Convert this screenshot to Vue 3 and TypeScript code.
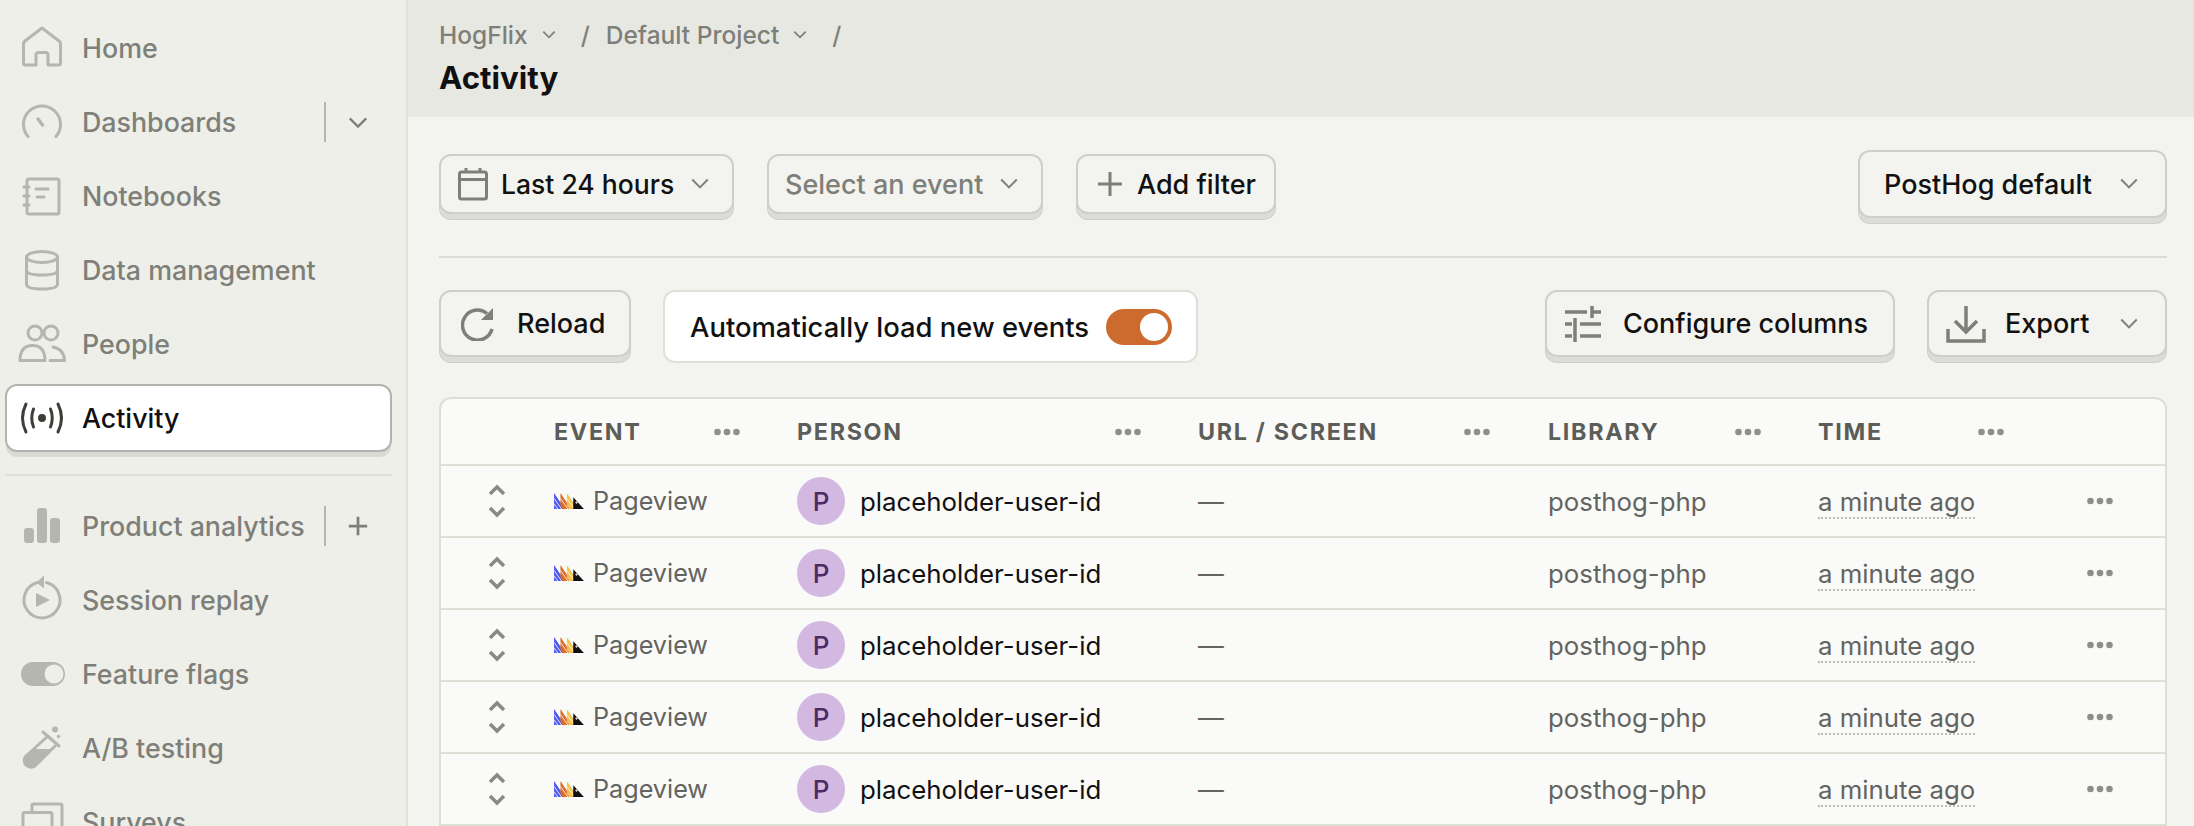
<script setup lang="ts">
// icon inner markup, drawn on a 44x44 box
const strokeIcons = {
  home: '<path d="M22 2 5 15q-1.500 1-1.500 3v19q0 2 2 2H16V29q0-2.500 2.500-2.500h7q2.500 0 2.500 2.500v10h10.500q2 0 2-2V18q0-2-1.500-3z"/>',
  gauge: '<path d="M8 36.500a18.500 18.500 0 1 1 28 0"/><path d="m18 19 4.500 6" stroke-width="3.500"/>',
  notebook: '<rect x="7" y="5" width="32" height="35" rx="2"/><path d="M4 13h5M4 22h5M4 31h5M16 15h12M17 23h7"/>',
  data: '<ellipse cx="22" cy="9" rx="15.500" ry="5.500"/><path d="M6.500 9v27q0 5 15.500 5t15.500-5V9M6.500 22q0 5 15.500 5t15.500-5"/>',
  people: '<circle cx="15" cy="11" r="7"/><circle cx="31" cy="11" r="7"/><path d="M0 38.500q0-15 12.500-15t12.500 15z"/><path d="M33 25q11 2 11.500 13.500H30"/>',
  activity: '<path d="M13.500 13q-3.500 9 0 18M30.500 13q3.500 9 0 18M6 8q-7 14 0 28M38 8q7 14 0 28"/><circle cx="22" cy="22" r="2.500" fill="currentColor"/>',
  replay: '<path d="M17.500 4.500a18 18 0 1 0 9 0"/><path d="M24 -2.500 16.500 4.500l7.500 6z" fill="currentColor" stroke="none"/><path d="M16 15v14l14-7z" fill="currentColor" stroke="none"/>',
}

const fillIcons = {
  bars: '<rect x="4" y="24" width="10" height="15" rx="3"/><rect x="17" y="4" width="10" height="35" rx="3"/><rect x="30" y="14" width="10" height="25" rx="3"/>',
  flag: '<rect x="1" y="10" width="44" height="24" rx="12"/><circle cx="34" cy="22" r="9.500" fill="#eeefe9"/>',
  flask: '<circle cx="35" cy="3.500" r="3"/><circle cx="38.500" cy="10.500" r="1.700"/><path d="M23 6 39 20" fill="none" stroke="currentColor" stroke-width="3"/><path d="M28 10 6 30a6.500 6.500 0 0 0 10 9l19-19" fill="none" stroke="currentColor" stroke-width="3"/><path d="M13 23h20L16 39a6.500 6.500 0 0 1-10-9z"/>',
}

const surveys = '<path d="M12 12V5.500q0-1.500 1.500-1.500h27q1.500 0 1.500 1.500v30M3 44V14q0-1.500 1.500-1.500h26q1.500 0 1.500 1.500v30"/>'

type Item = { label: string; icon: string; solid?: boolean; side?: 'chevron' | 'plus'; active?: boolean }

const topItems: Item[] = [
  { label: 'Home', icon: strokeIcons.home },
  { label: 'Dashboards', icon: strokeIcons.gauge, side: 'chevron' },
  { label: 'Notebooks', icon: strokeIcons.notebook },
  { label: 'Data management', icon: strokeIcons.data },
  { label: 'People', icon: strokeIcons.people },
  { label: 'Activity', icon: strokeIcons.activity, active: true },
]

const productItems: Item[] = [
  { label: 'Product analytics', icon: fillIcons.bars, solid: true, side: 'plus' },
  { label: 'Session replay', icon: strokeIcons.replay },
  { label: 'Feature flags', icon: fillIcons.flag, solid: true },
  { label: 'A/B testing', icon: fillIcons.flask, solid: true },
  { label: 'Surveys', icon: surveys },
]

const columns = [
  { label: 'EVENT', dots: 173 },
  { label: 'PERSON', dots: 331 },
  { label: 'URL / SCREEN', dots: 279 },
  { label: 'LIBRARY', dots: 200 },
  { label: 'TIME', dots: 173 },
]

const rows = [1, 2, 3, 4, 5]
</script>

<template>
  <div class="app">
    <aside class="sidebar">
      <div v-for="item in topItems" :key="item.label" class="nav-item" :class="{ 'nav-item--active': item.active }">
        <svg class="nav-icon" :class="{ 'nav-icon--solid': item.solid }" viewBox="0 0 44 44" v-html="item.icon" />
        <span class="nav-label">{{ item.label }}</span>
        <template v-if="item.side">
          <span class="nav-sep" />
          <svg class="nav-side" viewBox="0 0 24 24"><path d="m3 8 9 9 9-9" /></svg>
        </template>
      </div>
      <div class="nav-divider" />
      <div v-for="item in productItems" :key="item.label" class="nav-item">
        <svg class="nav-icon" :class="{ 'nav-icon--solid': item.solid }" viewBox="0 0 44 44" v-html="item.icon" />
        <span class="nav-label">{{ item.label }}</span>
        <template v-if="item.side">
          <span class="nav-sep" />
          <svg class="nav-side nav-side--plus" viewBox="0 0 24 24"><path d="M12 2v20M2 12h20" /></svg>
        </template>
      </div>
    </aside>

    <main class="main">
      <header class="page-head">
        <div class="crumbs">
          <span>HogFlix</span>
          <svg class="crumb-chev" viewBox="0 0 14 14"><path d="m2 4 5 5 5-5" /></svg>
          <span class="crumb-slash">/</span>
          <span>Default Project</span>
          <svg class="crumb-chev" viewBox="0 0 14 14"><path d="m2 4 5 5 5-5" /></svg>
          <span class="crumb-slash">/</span>
        </div>
        <h1 class="page-title">Activity</h1>
      </header>

      <div class="content">
        <div class="toolbar">
          <button type="button" class="btn btn--date">
            <svg class="btn-icon btn-icon--cal" viewBox="0 0 30 34"><path d="M8 1v5M22 1v5" /><rect x="1.500" y="5" width="27" height="27" rx="2" /><path d="M1.500 12.500h27" /></svg>
            <span class="btn-text">Last 24 hours</span>
            <svg class="chev" viewBox="0 0 18 18"><path d="m2 5 7 7 7-7" /></svg>
          </button>
          <button type="button" class="btn btn--select">
            <span class="btn-text btn-text--muted">Select an event</span>
            <svg class="chev" viewBox="0 0 18 18"><path d="m2 5 7 7 7-7" /></svg>
          </button>
          <button type="button" class="btn btn--filter">
            <svg class="btn-icon btn-icon--plus" viewBox="0 0 24 24"><path d="M12 0v24M0 12h24" /></svg>
            <span class="btn-text">Add filter</span>
          </button>
          <button type="button" class="btn btn--default">
            <span class="btn-text">PostHog default</span>
            <svg class="chev" viewBox="0 0 18 18"><path d="m2 5 7 7 7-7" /></svg>
          </button>
        </div>

        <div class="rule" />

        <div class="toolbar toolbar--second">
          <button type="button" class="btn btn--reload">
            <svg class="btn-icon btn-icon--reload" viewBox="0 0 34 34"><path d="M26 6.500A15 15 0 1 0 31 22" /><path d="M32 1v12H20z" fill="currentColor" stroke="none" /></svg>
            <span class="btn-text">Reload</span>
          </button>
          <div class="auto-load">
            <span class="auto-text">Automatically load new events</span>
            <span class="toggle"><span class="toggle-knob" /></span>
          </div>
          <button type="button" class="btn btn--columns">
            <svg class="btn-icon btn-icon--sliders" viewBox="0 0 36 36"><path d="M0 6h22M28 6h8M27 0v12M0 18h7M15 18h21M10 12v12M0 30h7M15 30h21M10 24v12" /></svg>
            <span class="btn-text">Configure columns</span>
          </button>
          <button type="button" class="btn btn--export">
            <svg class="btn-icon btn-icon--export" viewBox="0 0 40 38"><path d="M20 1v25M9 16l11 11 11-11M2 24v12h36V24" /></svg>
            <span class="btn-text">Export</span>
            <svg class="chev" viewBox="0 0 18 18"><path d="m2 5 7 7 7-7" /></svg>
          </button>
        </div>

        <div class="table">
          <div class="table-row table-row--head">
            <div />
            <div v-for="col in columns" :key="col.label" class="head-cell" :style="{ width: col.dots + 13 + 'px' }">
              <span class="head-label">{{ col.label }}</span>
              <svg class="dots" viewBox="0 0 26 8"><circle cx="3.500" cy="4" r="3.300" /><circle cx="13" cy="4" r="3.300" /><circle cx="22.500" cy="4" r="3.300" /></svg>
            </div>
            <div />
          </div>
          <div v-for="row in rows" :key="row" class="table-row">
            <div class="expand">
              <svg viewBox="0 0 18 12"><path d="m2 10 7-7 7 7" /></svg>
              <svg viewBox="0 0 18 12"><path d="m2 2 7 7 7-7" /></svg>
            </div>
            <div class="event-cell">
              <svg class="hog" viewBox="0 0 28 15">
                <path d="M0 0 10 15H0z" fill="#4f57f0" />
                <path d="M6 0 16 15H8L6 12z" fill="#dd6d26" />
                <path d="M12 0 22 15h-8l-2-3z" fill="#f2c14e" />
                <path d="M0 5 7 15M0 10l3.500 5M6 5l7 10M12 5l7 10" stroke="#fafaf8" stroke-width=".8" fill="none" />
                <path d="M18 4 28 15H18z" fill="#111" />
                <circle cx="21" cy="9" r="1" fill="#fafaf8" />
              </svg>
              <span class="event-name">Pageview</span>
            </div>
            <div class="person-cell">
              <span class="avatar">P</span>
              <span class="person-name">placeholder-user-id</span>
            </div>
            <div class="muted-cell">—</div>
            <div class="muted-cell">posthog-php</div>
            <div class="muted-cell"><span class="time">a minute ago</span></div>
            <div class="row-menu">
              <svg class="dots" viewBox="0 0 26 8"><circle cx="3.500" cy="4" r="3.300" /><circle cx="13" cy="4" r="3.300" /><circle cx="22.500" cy="4" r="3.300" /></svg>
            </div>
          </div>
        </div>
      </div>
    </main>
  </div>
</template>

<style>
html,
body {
  margin: 0;
  overflow: hidden;
}
</style>

<style scoped>
.app {
  display: flex;
  width: 2194px;
  height: 826px;
  overflow: hidden;
  background: #f3f4ef;
  font-family: Inter, "Liberation Sans", sans-serif;
  font-weight: 500;
  color: #111;
}

.sidebar {
  box-sizing: border-box;
  flex: 0 0 408px;
  height: 826px;
  padding: 11px 14px 0 5px;
  overflow: hidden;
  background: #eeefe9;
  border-right: 2px solid #dfe0da;
}

.nav-item {
  box-sizing: border-box;
  display: flex;
  align-items: center;
  height: 74px;
  padding-left: 15px;
  color: #7e7f79;
  font-size: 26.800px;
}

.nav-item--active {
  height: 68px;
  margin: 3px 0;
  padding-left: 13px;
  border: 2px solid #b3b4ae;
  border-radius: 12px;
  background: #fff;
  color: #111;
  box-shadow: 0 6px 0 -1px #dadad5;
}

.nav-item--active .nav-icon {
  color: #3d3e39;
}

.nav-icon {
  flex: 0 0 44px;
  width: 44px;
  height: 44px;
  margin-right: 18px;
  overflow: visible;
  fill: none;
  stroke: currentColor;
  stroke-width: 3;
  stroke-linecap: round;
  stroke-linejoin: round;
  color: #b5b6af;
}

.nav-icon--solid {
  fill: currentColor;
  stroke: none;
}

.nav-label {
  flex: 1 1 auto;
  white-space: nowrap;
}

.nav-sep {
  flex: 0 0 2px;
  height: 40px;
  margin-right: 21px;
  background: #b5b6af;
}

.nav-side {
  flex: 0 0 22px;
  width: 22px;
  height: 22px;
  margin-right: 23px;
  fill: none;
  stroke: #7e7f79;
  stroke-width: 2.500;
}

.nav-side--plus {
  stroke-width: 3;
}

.nav-divider {
  height: 2px;
  margin: 22px 0 13px;
  background: #dfe0da;
}

.main {
  flex: 1 1 auto;
  min-width: 0;
}

.page-head {
  box-sizing: border-box;
  height: 117px;
  padding: 19px 27px 0 31px;
  background: #e8e8e3;
}

.crumbs {
  display: flex;
  align-items: center;
  height: 32px;
  color: #7e7f79;
  font-size: 24.500px;
}

.crumb-chev {
  width: 16px;
  height: 16px;
  margin-left: 13px;
  fill: none;
  stroke: #7e7f79;
  stroke-width: 1.600;
}

.crumb-slash {
  margin: 0 16px 0 24px;
}

.page-title {
  margin: 7px 0 0;
  font-size: 31.300px;
  line-height: 40px;
  font-weight: 700;
  color: #111;
}

.content {
  padding: 33px 27px 0 31px;
}

.toolbar {
  display: flex;
  align-items: center;
  gap: 33px;
  height: 68px;
}

.toolbar--second {
  align-items: flex-start;
  gap: 32px;
  height: 73px;
}

.rule {
  height: 2px;
  margin: 38px 0 32px;
  background: #dcdcd6;
}

.btn {
  box-sizing: border-box;
  display: flex;
  align-items: center;
  height: 60px;
  padding: 0;
  border: 2px solid #cfcfca;
  border-radius: 12px;
  background: #f3f4ef;
  box-shadow: 0 6px 0 -1px #dcdcd8, 0 6px 0 0 #cfcfca;
  font: inherit;
  font-size: 27px;
  color: #111;
  white-space: nowrap;
}

.btn-text--muted {
  color: #7e7f79;
}

.btn-icon {
  flex: none;
  fill: none;
  stroke: #7e7f79;
  stroke-width: 3;
  color: #7e7f79;
}

.chev {
  flex: none;
  width: 20px;
  height: 20px;
  fill: none;
  stroke: #7e7f79;
  stroke-width: 1.800;
}

.btn--date {
  width: 295px;
  padding-left: 17px;
  font-size: 26.500px;
}

.btn-icon--cal {
  width: 30px;
  height: 34px;
  margin-right: 13px;
}

.btn--date .chev {
  margin-left: auto;
  margin-right: 22px;
}

.btn--select {
  width: 276px;
  padding-left: 16px;
}

.btn--select .chev {
  margin-left: auto;
  margin-right: 22px;
}

.btn--filter {
  width: 200px;
  padding-left: 20px;
}

.btn-icon--plus {
  width: 24px;
  height: 24px;
  margin-right: 15px;
}

.btn--default {
  width: 309px;
  height: 68px;
  margin-left: auto;
  padding-left: 24px;
}

.btn--default .chev {
  margin-left: auto;
  margin-right: 26px;
}

.toolbar--second .btn {
  height: 67px;
}

.btn--reload {
  width: 192px;
  padding-left: 20px;
}

.btn-icon--reload {
  width: 34px;
  height: 34px;
  margin-right: 22px;
  stroke-width: 3.500;
}

.auto-load {
  box-sizing: border-box;
  display: flex;
  align-items: center;
  width: 535px;
  height: 73px;
  padding-left: 25px;
  border: 2px solid #dfe0da;
  border-radius: 12px;
  background: #fff;
  font-size: 27.400px;
  white-space: nowrap;
}

.toggle {
  box-sizing: border-box;
  display: flex;
  justify-content: flex-end;
  align-items: center;
  width: 66px;
  height: 36px;
  margin-left: auto;
  margin-right: 24px;
  padding-right: 4px;
  border-radius: 18px;
  background: #cd6a2e;
}

.toggle-knob {
  width: 28px;
  height: 28px;
  border-radius: 50%;
  background: #fff;
}

.btn--columns {
  width: 350px;
  margin-left: auto;
  padding-left: 18px;
}

.btn-icon--sliders {
  width: 36px;
  height: 36px;
  margin-right: 22px;
  stroke-width: 3.500;
}

.btn--export {
  width: 240px;
  padding-left: 17px;
}

.btn-icon--export {
  width: 40px;
  height: 38px;
  margin-right: 19px;
  stroke-width: 3.500;
}

.btn--export .chev {
  margin-left: auto;
  margin-right: 26px;
}

.table {
  margin-top: 34px;
  border: 2px solid #dddfd7;
  border-radius: 12px 12px 0 0;
  background: #fafaf8;
}

.table-row {
  display: grid;
  grid-template-columns: 113px 243px 401px 350px 270px 210px 136px;
  height: 72px;
  box-sizing: border-box;
  align-items: center;
  border-bottom: 2px solid #dddfd7;
  font-size: 25.800px;
  font-weight: 400;
}

.table-row--head {
  height: 67px;
}

.head-cell {
  display: flex;
  align-items: center;
  justify-content: space-between;
}

.head-label {
  font-size: 23.300px;
  font-weight: 700;
  letter-spacing: 1.700px;
  color: #5c5d58;
}

.dots {
  flex: none;
  width: 26px;
  height: 8px;
  fill: #8f8f8a;
}

.expand {
  display: flex;
  flex-direction: column;
  align-items: center;
  gap: 10px;
  width: 112px;
}

.expand svg {
  width: 18px;
  height: 12px;
  fill: none;
  stroke: #8a8a85;
  stroke-width: 3.500;
}

.event-cell {
  display: flex;
  align-items: center;
  gap: 9px;
  color: #63645f;
}

.event-name {
  font-size: 25.200px;
}

.hog {
  width: 30px;
  height: 16px;
}

.person-cell {
  display: flex;
  align-items: center;
  gap: 15px;
}

.avatar {
  display: flex;
  align-items: center;
  justify-content: center;
  flex: none;
  width: 48px;
  height: 48px;
  border-radius: 50%;
  background: #d3b8e2;
  color: #4b2a66;
  font-size: 26px;
  font-weight: 500;
}

.person-name {
  color: #111;
}

.muted-cell {
  color: #63645f;
}

.time {
  display: inline-block;
  margin-top: 3px;
  border-bottom: 2px dotted #bdbdb8;
  line-height: 30px;
}

.row-menu {
  padding-left: 59px;
  display: flex;
}
</style>
